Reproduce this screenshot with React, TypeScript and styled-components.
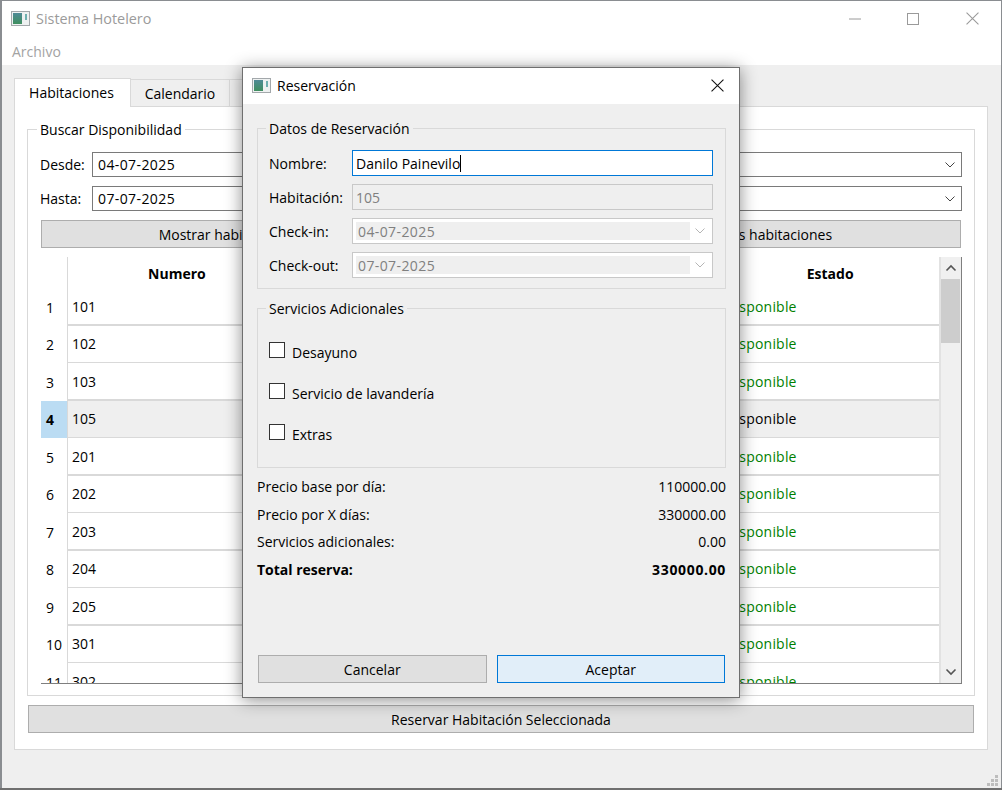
import React from 'react';
import styled, { createGlobalStyle } from 'styled-components';

const Global = createGlobalStyle`
  html, body { margin: 0; padding: 0; background: #fff; }
  * { box-sizing: border-box; }
  body { font-family: "Open Sans", "Noto Sans", sans-serif; font-size: 14px; color: #000; }
`;

const Screen = styled.div`
  position: relative;
  width: 1002px;
  height: 790px;
  overflow: hidden;
  background: #6f6f6f;
`;
const MainWindow = styled.div`
  width: 1002px;
  height: 788px;
  border: 1px solid #8a8d91;
  border-bottom: none;
  border-left-width: 2px;
  display: flex;
  flex-direction: column;
  background: #efefef;
`;
const TitleBar = styled.div`
  height: 33px;
  flex: none;
  background: #fff;
  display: flex;
  align-items: center;
  padding: 2px 0 0 9px;
  color: #9b9b9b;
  font-size: 14.4px;
`;
const TitleText = styled.span`
  flex: 1;
  margin-left: 6px;
`;
const WinButton = styled.div<{ $w: number }>`
  width: ${(p) => p.$w}px;
  height: 31px;
  display: flex;
  align-items: center;
  justify-content: center;
`;
const MenuBar = styled.div`
  height: 31px;
  flex: none;
  background: #fff;
  padding: 8px 0 0 10px;
  color: #a3a3a3;
`;
const Content = styled.div`
  flex: 1;
  padding: 13px 12px 0 12px;
  display: flex;
  flex-direction: column;
`;
const TabBar = styled.div`
  display: flex;
  height: 28px;
  flex: none;
  position: relative;
  z-index: 1;
`;
const Tab = styled.div<{ $active?: boolean; $w: number }>`
  width: ${(p) => p.$w}px;
  height: ${(p) => (p.$active ? 29 : 28)}px;
  margin-top: ${(p) => (p.$active ? 0 : 1)}px;
  padding: ${(p) => (p.$active ? '0 2px 2px 0' : '0')};
  background: ${(p) => (p.$active ? '#fff' : '#efefef')};
  border: 1px solid #d9d9d9;
  border-left-width: ${(p) => (p.$active ? 1 : 0)}px;
  border-bottom-width: ${(p) => (p.$active ? 0 : 1)}px;
  display: flex;
  align-items: center;
  justify-content: center;
`;
const Pane = styled.div`
  width: 974px;
  height: 644px;
  background: #fff;
  border: 1px solid #d9d9d9;
  padding: 22px 12px 0 12px;
`;
const GroupBox = styled.div<{ $h: number; $mt?: number }>`
  position: relative;
  height: ${(p) => p.$h}px;
  margin-top: ${(p) => p.$mt ?? 0}px;
  border: 1px solid #d9d9d9;
`;
const Legend = styled.span<{ $bg: string; $left: number }>`
  position: absolute;
  left: ${(p) => p.$left}px;
  top: -10px;
  padding: 0 3px;
  line-height: 20px;
  background: ${(p) => p.$bg};
`;
const SearchBody = styled.div`
  padding: 22px 12px 0 12px;
  display: flex;
  flex-direction: column;
`;
const FormRow = styled.div<{ $mb?: number }>`
  display: flex;
  align-items: center;
  margin-bottom: ${(p) => p.$mb ?? 9}px;
`;
const RowLabel = styled.div<{ $w: number }>`
  width: ${(p) => p.$w}px;
  flex: none;
`;
const DateBox = styled.div`
  flex: 1;
  height: 25px;
  border: 1px solid #7a7a7a;
  background: #fff;
  display: flex;
  align-items: center;
  justify-content: space-between;
  padding: 0 5px 0 5px;
`;
const DateText = styled.span`
  letter-spacing: 0.4px;
`;
const ButtonRow = styled.div`
  display: grid;
  grid-template-columns: 452px 458px;
  gap: 10px;
  margin-left: 1px;
  margin-bottom: 9px;
`;
const PushButton = styled.div<{ $primary?: boolean }>`
  flex: 1;
  height: 28px;
  background: ${(p) => (p.$primary ? '#e1eef9' : '#e0e0e0')};
  border: 1px solid ${(p) => (p.$primary ? '#0078d7' : '#adadad')};
  display: flex;
  align-items: center;
  justify-content: center;
`;
const Table = styled.div`
  height: 427px;
  margin-left: 1px;
  border-right: 1px solid #7f7f7f;
  border-bottom: 1px solid #7f7f7f;
  display: flex;
  overflow: hidden;
`;
const TableMain = styled.div`
  flex: 1;
  display: flex;
  flex-direction: column;
  overflow: hidden;
`;
const HeaderRow = styled.div`
  height: 31px;
  flex: none;
  display: grid;
  grid-template-columns: 27px repeat(4, 217.75px);
  font-weight: 700;
`;
const HeaderCell = styled.div<{ $corner?: boolean }>`
  display: flex;
  align-items: center;
  justify-content: center;
  padding-top: 2px;
  border-right: ${(p) => (p.$corner ? '1px solid #d9d9d9' : 'none')};
`;
const DataRow = styled.div<{ $h: number }>`
  height: ${(p) => p.$h}px;
  flex: none;
  display: grid;
  grid-template-columns: 27px repeat(4, 217.75px);
`;
const RowHead = styled.div<{ $sel?: boolean }>`
  display: flex;
  align-items: center;
  padding-left: 5px;
  border-right: 1px solid #d9d9d9;
  background: ${(p) => (p.$sel ? '#bbdcf3' : '#fff')};
  font-weight: ${(p) => (p.$sel ? 700 : 400)};
`;
const Cell = styled.div<{ $thick: boolean; $sel?: boolean; $green?: boolean }>`
  display: flex;
  align-items: center;
  padding: 0 0 ${(p) => (p.$thick ? 0 : 1)}px 4px;
  background: ${(p) => (p.$sel ? '#efefef' : '#fff')};
  border-bottom: ${(p) => (p.$thick ? 2 : 1)}px solid #d9d9d9;
  color: ${(p) => (p.$green && !p.$sel ? '#008000' : '#000')};
  letter-spacing: ${(p) => (p.$green ? '0.2px' : '0')};
`;
const ScrollBar = styled.div`
  width: 22px;
  flex: none;
  background: #f0f0f0;
  border-left: 2px solid #e2e2e2;
  padding-right: 1px;
  display: flex;
  flex-direction: column;
`;
const ScrollBtn = styled.div`
  height: 22px;
  display: flex;
  align-items: center;
  justify-content: center;
`;
const ScrollThumb = styled.div`
  height: 64px;
  background: #cdcdcd;
`;
const ScrollTrack = styled.div`
  flex: 1;
`;
const BottomButton = styled(PushButton)`
  flex: none;
  width: 946px;
  margin: 9px 0 0 1px;
`;
const Grip = styled.svg`
  position: absolute;
  right: 3px;
  bottom: 3px;
`;
const Dialog = styled.div`
  position: absolute;
  z-index: 2;
  left: 242px;
  top: 67px;
  width: 498px;
  height: 631px;
  background: #efefef;
  border: 1px solid #6f6f6f;
  box-shadow: 0 2px 16px rgba(0, 0, 0, 0.45);
  display: flex;
  flex-direction: column;
`;
const DialogTitle = styled.div`
  height: 36px;
  flex: none;
  background: #fff;
  display: flex;
  align-items: center;
  padding: 0 0 2px 9px;
`;
const DialogClose = styled.div`
  width: 44px;
  display: flex;
  justify-content: center;
`;
const DialogBody = styled.div`
  padding: 24px 13px 0 14px;
  flex: 1;
  display: flex;
  flex-direction: column;
`;
const DialogForm = styled.div`
  padding: 21px 12px 0 11px;
`;
const TextField = styled.div<{ $focus?: boolean; $off?: boolean }>`
  flex: 1;
  height: 26px;
  border: ${(p) => (p.$focus ? '1.5px solid #0078d7' : '1px solid #c8c8c8')};
  background: ${(p) => (p.$off ? '#efefef' : '#fff')};
  color: ${(p) => (p.$off ? '#808080' : '#000')};
  display: flex;
  align-items: center;
  padding-left: 3px;
`;
const Caret = styled.span`
  width: 1px;
  height: 17px;
  background: #000;
`;
const OffCombo = styled.div`
  flex: 1;
  height: 26px;
  border: 1px solid #c8c8c8;
  background: #fff;
  padding: 3px;
  display: flex;
  align-items: center;
`;
const OffComboValue = styled.div`
  width: 334px;
  height: 18px;
  background: #efefef;
  color: #808080;
  display: flex;
  align-items: center;
  padding-left: 2px;
  letter-spacing: 0.4px;
`;
const OffComboArrow = styled.div`
  flex: 1;
  display: flex;
  justify-content: center;
`;
const ServiceList = styled.div`
  padding-top: 33px;
  padding-left: 11px;
  display: flex;
  flex-direction: column;
  gap: 25px;
`;
const ServiceRow = styled.div`
  display: flex;
  align-items: center;
  height: 16px;
  gap: 7px;
`;
const ServiceLabel = styled.span`
  padding-top: 4px;
`;
const CheckBox = styled.span`
  width: 16px;
  height: 16px;
  border: 1px solid #333;
  background: #fff;
  flex: none;
`;
const Summary = styled.div`
  margin-top: 5px;
  display: flex;
  flex-direction: column;
`;
const SummaryRow = styled.div<{ $bold?: boolean }>`
  height: 27.5px;
  display: flex;
  align-items: center;
  justify-content: space-between;
  font-weight: ${(p) => (p.$bold ? 700 : 400)};
`;
const Amount = styled.span<{ $bold?: boolean }>`
  letter-spacing: ${(p) => (p.$bold ? '0.65px' : '0')};
`;
const Spacer = styled.div`
  flex: 1;
`;
const DialogButtons = styled.div`
  display: flex;
  gap: 10px;
  margin: 0 1px 14px 1px;
`;

const AppIcon = () => (
  <svg width="19" height="15" viewBox="0 0 19 15">
    <defs>
      <linearGradient id="ic" x1="0" y1="0" x2="0" y2="1">
        <stop offset="0" stopColor="#4f8a96" />
        <stop offset="1" stopColor="#3f8f5f" />
      </linearGradient>
    </defs>
    <rect x="0.5" y="0.5" width="18" height="14" fill="#eef1f1" stroke="#a3a8ab" />
    <rect x="2" y="2" width="9" height="11" fill="url(#ic)" />
    <rect x="14" y="3" width="2" height="6" fill="#6fb0b0" />
  </svg>
);

const Chevron = ({ color = '#444' }: { color?: string }) => (
  <svg width="12" height="8" viewBox="0 0 12 8" fill="none">
    <path d="M1.5 1.5 L6 6 L10.5 1.5" stroke={color} strokeWidth="1" />
  </svg>
);

const Cross = ({ color, size }: { color: string; size: number }) => (
  <svg width={size} height={size} viewBox="0 0 12 12">
    <path d="M0.5 0.5 L11.5 11.5 M11.5 0.5 L0.5 11.5" stroke={color} strokeWidth="1" fill="none" />
  </svg>
);

const rooms = ['101', '102', '103', '105', '201', '202', '203', '204', '205', '301', '302'];

export default function App() {
  return (
    <Screen>
      <Global />
      <MainWindow>
        <TitleBar>
          <AppIcon />
          <TitleText>Sistema Hotelero</TitleText>
          <WinButton $w={56}>
            <svg width="12" height="2" viewBox="0 0 12 2"><path d="M0 1H12" stroke="#9a9a9a" /></svg>
          </WinButton>
          <WinButton $w={60}>
            <svg width="12" height="12" viewBox="0 0 12 12"><rect x="0.5" y="0.5" width="11" height="11" fill="none" stroke="#9a9a9a" /></svg>
          </WinButton>
          <WinButton $w={58}>
            <Cross color="#9a9a9a" size={13} />
          </WinButton>
        </TitleBar>
        <MenuBar>Archivo</MenuBar>
        <Content>
          <TabBar>
            <Tab $active $w={117}>Habitaciones</Tab>
            <Tab $w={99}>Calendario</Tab>
            <Tab $w={99} />
          </TabBar>
          <Pane>
            <GroupBox $h={567}>
              <Legend $bg="#fff" $left={9}>Buscar Disponibilidad</Legend>
              <SearchBody>
                <FormRow>
                  <RowLabel $w={52}>Desde:</RowLabel>
                  <DateBox><DateText>04-07-2025</DateText><Chevron /></DateBox>
                </FormRow>
                <FormRow>
                  <RowLabel $w={52}>Hasta:</RowLabel>
                  <DateBox><DateText>07-07-2025</DateText><Chevron /></DateBox>
                </FormRow>
                <ButtonRow>
                  <PushButton>Mostrar habitaciones disponibles</PushButton>
                  <PushButton>Mostrar todas las habitaciones</PushButton>
                </ButtonRow>
                <Table>
                  <TableMain>
                    <HeaderRow>
                      <HeaderCell $corner />
                      <HeaderCell>Numero</HeaderCell>
                      <HeaderCell />
                      <HeaderCell />
                      <HeaderCell>Estado</HeaderCell>
                    </HeaderRow>
                    {rooms.map((r, i) => {
                      const thick = i % 2 === 0;
                      const sel = i === 3;
                      return (
                        <DataRow key={r} $h={thick ? 38 : 37}>
                          <RowHead $sel={sel}>{i + 1}</RowHead>
                          <Cell $thick={thick} $sel={sel}>{r}</Cell>
                          <Cell $thick={thick} $sel={sel} />
                          <Cell $thick={thick} $sel={sel} />
                          <Cell $thick={thick} $sel={sel} $green>Disponible</Cell>
                        </DataRow>
                      );
                    })}
                  </TableMain>
                  <ScrollBar>
                    <ScrollBtn>
                      <svg width="12" height="8" viewBox="0 0 12 8" fill="none"><path d="M1.5 6.5 L6 2 L10.5 6.5" stroke="#555" strokeWidth="1.6" /></svg>
                    </ScrollBtn>
                    <ScrollThumb />
                    <ScrollTrack />
                    <ScrollBtn>
                      <svg width="12" height="8" viewBox="0 0 12 8" fill="none"><path d="M1.5 1.5 L6 6 L10.5 1.5" stroke="#555" strokeWidth="1.6" /></svg>
                    </ScrollBtn>
                  </ScrollBar>
                </Table>
              </SearchBody>
            </GroupBox>
            <BottomButton>Reservar Habitación Seleccionada</BottomButton>
          </Pane>
        </Content>
      </MainWindow>
      <Grip width="12" height="12" viewBox="0 0 12 12" fill="#bdbdbd">
        <rect x="8" y="0" width="3" height="3" />
        <rect x="4" y="4" width="3" height="3" />
        <rect x="8" y="4" width="3" height="3" />
        <rect x="0" y="8" width="3" height="3" />
        <rect x="4" y="8" width="3" height="3" />
        <rect x="8" y="8" width="3" height="3" />
      </Grip>
      <Dialog>
        <DialogTitle>
          <AppIcon />
          <TitleText>Reservación</TitleText>
          <DialogClose><Cross color="#111" size={13} /></DialogClose>
        </DialogTitle>
        <DialogBody>
          <GroupBox $h={161}>
            <Legend $bg="#efefef" $left={8}>Datos de Reservación</Legend>
            <DialogForm>
              <FormRow $mb={8}>
                <RowLabel $w={83}>Nombre:</RowLabel>
                <TextField $focus>Danilo Painevilo<Caret /></TextField>
              </FormRow>
              <FormRow $mb={8}>
                <RowLabel $w={83}>Habitación:</RowLabel>
                <TextField $off>105</TextField>
              </FormRow>
              <FormRow $mb={8}>
                <RowLabel $w={83}>Check-in:</RowLabel>
                <OffCombo>
                  <OffComboValue>04-07-2025</OffComboValue>
                  <OffComboArrow><Chevron color="#b5b5b5" /></OffComboArrow>
                </OffCombo>
              </FormRow>
              <FormRow $mb={0}>
                <RowLabel $w={83}>Check-out:</RowLabel>
                <OffCombo>
                  <OffComboValue>07-07-2025</OffComboValue>
                  <OffComboArrow><Chevron color="#b5b5b5" /></OffComboArrow>
                </OffCombo>
              </FormRow>
            </DialogForm>
          </GroupBox>
          <GroupBox $h={160} $mt={19}>
            <Legend $bg="#efefef" $left={8}>Servicios Adicionales</Legend>
            <ServiceList>
              <ServiceRow><CheckBox /><ServiceLabel>Desayuno</ServiceLabel></ServiceRow>
              <ServiceRow><CheckBox /><ServiceLabel>Servicio de lavandería</ServiceLabel></ServiceRow>
              <ServiceRow><CheckBox /><ServiceLabel>Extras</ServiceLabel></ServiceRow>
            </ServiceList>
          </GroupBox>
          <Summary>
            <SummaryRow><span>Precio base por día:</span><Amount>110000.00</Amount></SummaryRow>
            <SummaryRow><span>Precio por X días:</span><Amount>330000.00</Amount></SummaryRow>
            <SummaryRow><span>Servicios adicionales:</span><Amount>0.00</Amount></SummaryRow>
            <SummaryRow $bold><span>Total reserva:</span><Amount $bold>330000.00</Amount></SummaryRow>
          </Summary>
          <Spacer />
          <DialogButtons>
            <PushButton>Cancelar</PushButton>
            <PushButton $primary>Aceptar</PushButton>
          </DialogButtons>
        </DialogBody>
      </Dialog>
    </Screen>
  );
}
